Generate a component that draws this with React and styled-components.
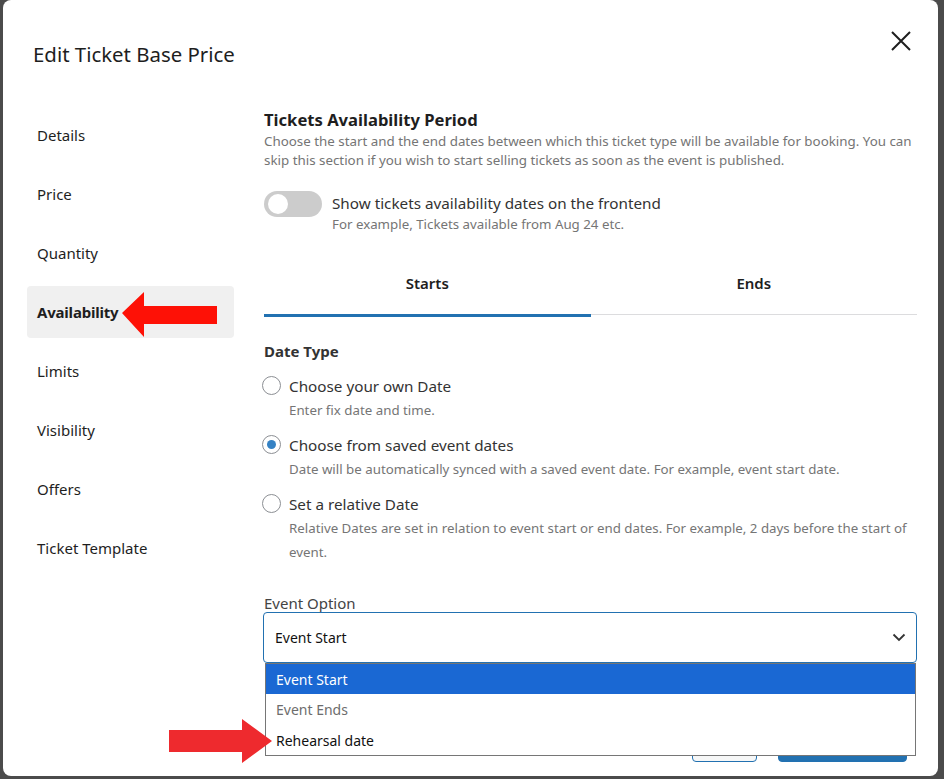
import React from "react";
import styled, { createGlobalStyle } from "styled-components";

const Global = createGlobalStyle`
  html, body { margin: 0; padding: 0; background: #4b4b4b; }
  body { font-family: "Noto Sans", "Open Sans", Arial, sans-serif; }
  * { box-sizing: border-box; }
`;

const Screen = styled.div`
  width: 944px;
  height: 779px;
  padding: 0 6px 3px 3px;
  overflow: hidden;
`;

const Modal = styled.div`
  position: relative;
  height: 776px;
  background: #fff;
  border-radius: 8px;
  overflow: hidden;
  display: flex;
  flex-direction: column;
`;

const Header = styled.div`
  height: 108px;
  padding: 40px 25px 0 30px;
  display: flex;
  justify-content: space-between;
  align-items: flex-start;
`;

const Title = styled.h1`
  margin: 0;
  font-size: 20.4px;
  line-height: 28px;
  font-weight: 400;
  color: #1e1e1e;
`;

const CloseButton = styled.button`
  border: 0;
  background: none;
  padding: 0;
  margin-top: -11px;
  width: 24px;
  height: 24px;
  cursor: pointer;
`;

const Body = styled.div`
  display: flex;
  flex: 1;
`;

const Sidebar = styled.nav`
  width: 261px;
  padding-top: 1px;
  padding-left: 24px;
  display: flex;
  flex-direction: column;
  gap: 7px;
`;

const NavItem = styled.div`
  width: 207px;
  height: 52px;
  padding-left: 10px;
  display: flex;
  align-items: center;
  border-radius: 4px;
  font-size: 15px;
  color: #1e1e1e;
  background: ${(p) => (p.$active ? "#f0f0f0" : "transparent")};
  font-weight: ${(p) => (p.$active ? 700 : 400)};
  letter-spacing: ${(p) => (p.$active ? "-0.2px" : "0")};
`;

const Content = styled.div`
  flex: 1;
  padding-right: 21px;
  display: flex;
  flex-direction: column;
`;

const SectionTitle = styled.h2`
  margin: 0;
  font-size: 16.6px;
  line-height: 24px;
  font-weight: 700;
  color: #1e1e1e;
`;

const Description = styled.p`
  margin: 0;
  font-size: 13.35px;
  line-height: 19px;
  color: #757575;
`;

const ToggleRow = styled.div`
  margin-top: 21px;
  display: flex;
  gap: 10px;
  align-items: flex-start;
`;

const Toggle = styled.div`
  width: 58px;
  height: 26px;
  border-radius: 13px;
  background: #cccccc;
  padding: 3px 4px;
  flex-shrink: 0;
`;

const Knob = styled.div`
  width: 20px;
  height: 20px;
  border-radius: 50%;
  background: #fff;
`;

const ToggleText = styled.div`
  padding-top: 2px;
  display: flex;
  flex-direction: column;
`;

const ToggleLabel = styled.div`
  font-size: 15.25px;
  line-height: 21px;
  color: #333;
`;

const SmallHelp = styled.div`
  margin-top: 1px;
  font-size: 13.3px;
  line-height: 18px;
  color: #757575;
`;

const Tabs = styled.div`
  margin-top: 27px;
  display: flex;
  align-items: flex-start;
`;

const Tab = styled.div`
  flex: 1;
  text-align: center;
  padding: 12px 0 20px;
  font-size: 15px;
  line-height: 22px;
  font-weight: 600;
  color: #1e1e1e;
  border-bottom: ${(p) => (p.$active ? "3px solid #2271b1" : "1px solid #dcdcde")};
`;

const FieldHeading = styled.div`
  margin-top: 23px;
  font-size: 15px;
  line-height: 22px;
  font-weight: 700;
  color: #333;
`;

const RadioList = styled.div`
  margin-top: 12px;
  display: flex;
  flex-direction: column;
  gap: 11px;
`;

const RadioOption = styled.div`
  display: grid;
  grid-template-columns: 19px 1fr;
  column-gap: 8px;
  margin-left: -2px;
`;

const RadioCircle = styled.span`
  width: 19px;
  height: 19px;
  margin-top: 2px;
  border-radius: 50%;
  border: 1px solid #8c8f94;
  background: #fff;
  display: flex;
  align-items: center;
  justify-content: center;
  &::after {
    content: "";
    width: 9px;
    height: 9px;
    border-radius: 50%;
    background: ${(p) => (p.$checked ? "#3582c4" : "transparent")};
  }
`;

const RadioLabel = styled.div`
  font-size: 15.25px;
  line-height: 24px;
  color: #333;
`;

const RadioHelp = styled.div`
  grid-column: 2;
  font-size: 13.3px;
  line-height: 24px;
  color: #757575;
`;

const SelectLabel = styled.div`
  margin-top: 29px;
  font-size: 15px;
  line-height: 20px;
  color: #444;
`;

const SelectWrap = styled.div`
  position: relative;
  margin-top: -1px;
  margin-left: -1px;
`;

const SelectBox = styled.div`
  height: 51px;
  border: 1px solid #2271b1;
  border-radius: 4px;
  padding: 0 10px 0 11px;
  display: flex;
  align-items: center;
  justify-content: space-between;
  font-size: 14px;
  color: #111;
`;

const DropList = styled.div`
  position: absolute;
  top: 51px;
  left: 2px;
  right: 1px;
  background: #fff;
  border: 1px solid #767676;
  z-index: 2;
`;

const DropItem = styled.div`
  height: ${(p) => p.$h || "30px"};
  padding-left: 10px;
  display: flex;
  align-items: center;
  font-size: 14px;
  background: ${(p) => (p.$selected ? "#1a68d3" : "#fff")};
  color: ${(p) => (p.$selected ? "#fff" : p.$muted ? "#6d6d6d" : "#111")};
`;

const Footer = styled.div`
  margin-top: 63px;
  display: flex;
  justify-content: flex-end;
  gap: 21px;
  padding-right: 10px;
`;

const Button = styled.button`
  height: 36px;
  width: ${(p) => p.$w};
  border-radius: 4px;
  border: 1px solid #2271b1;
  background: ${(p) => (p.$primary ? "#2271b1" : "#f6f7f7")};
  color: ${(p) => (p.$primary ? "#fff" : "#2271b1")};
  font-size: 14px;
`;

const Arrow = styled.svg`
  position: absolute;
  left: ${(p) => p.$x}px;
  top: ${(p) => p.$y}px;
  z-index: 5;
`;

const navItems = ["Details", "Price", "Quantity", "Availability", "Limits", "Visibility", "Offers", "Ticket Template"];

export default function App() {
  return (
    <>
      <Global />
      <Screen>
        <Modal>
          <Header>
            <Title>Edit Ticket Base Price</Title>
            <CloseButton aria-label="Close">
              <svg width="24" height="24" viewBox="0 0 24 24">
                <path d="M3 3 L21 21 M21 3 L3 21" stroke="#1e1e1e" strokeWidth="2" fill="none" />
              </svg>
            </CloseButton>
          </Header>
          <Body>
            <Sidebar>
              {navItems.map((n) => (
                <NavItem key={n} $active={n === "Availability"}>{n}</NavItem>
              ))}
            </Sidebar>
            <Content>
              <SectionTitle>Tickets Availability Period</SectionTitle>
              <Description>
                Choose the start and the end dates between which this ticket type will be available for booking. You can skip this section if you wish to start selling tickets as soon as the event is published.
              </Description>
              <ToggleRow>
                <Toggle><Knob /></Toggle>
                <ToggleText>
                  <ToggleLabel>Show tickets availability dates on the frontend</ToggleLabel>
                  <SmallHelp>For example, Tickets available from Aug 24 etc.</SmallHelp>
                </ToggleText>
              </ToggleRow>
              <Tabs>
                <Tab $active>Starts</Tab>
                <Tab>Ends</Tab>
              </Tabs>
              <FieldHeading>Date Type</FieldHeading>
              <RadioList>
                <RadioOption>
                  <RadioCircle />
                  <RadioLabel>Choose your own Date</RadioLabel>
                  <RadioHelp>Enter fix date and time.</RadioHelp>
                </RadioOption>
                <RadioOption>
                  <RadioCircle $checked />
                  <RadioLabel>Choose from saved event dates</RadioLabel>
                  <RadioHelp>Date will be automatically synced with a saved event date. For example, event start date.</RadioHelp>
                </RadioOption>
                <RadioOption>
                  <RadioCircle />
                  <RadioLabel>Set a relative Date</RadioLabel>
                  <RadioHelp>Relative Dates are set in relation to event start or end dates. For example, 2 days before the start of event.</RadioHelp>
                </RadioOption>
              </RadioList>
              <SelectLabel>Event Option</SelectLabel>
              <SelectWrap>
                <SelectBox>
                  <span>Event Start</span>
                  <svg width="14" height="9" viewBox="0 0 14 9">
                    <path d="M1.5 1.5 L7 7 L12.5 1.5" stroke="#333" strokeWidth="1.8" fill="none" />
                  </svg>
                </SelectBox>
                <DropList>
                  <DropItem $selected $h="30px">Event Start</DropItem>
                  <DropItem $muted $h="31px">Event Ends</DropItem>
                  <DropItem $h="30px">Rehearsal date</DropItem>
                </DropList>
              </SelectWrap>
              <Footer>
                <Button $w="65px">Cancel</Button>
                <Button $primary $w="129px">Save</Button>
              </Footer>
            </Content>
          </Body>
          <Arrow $x={119} $y={291} width="96" height="47" viewBox="0 0 96 47">
            <polygon points="0,22 22,1 22,15 95,15 95,33 22,33 22,46" fill="#fe1106" />
          </Arrow>
          <Arrow $x={166} $y={719} width="104" height="45" viewBox="0 0 104 45">
            <polygon points="0,11 73,11 73,0 103,22 73,44 73,33 0,33" fill="#ee2a2e" />
          </Arrow>
        </Modal>
      </Screen>
    </>
  );
}
